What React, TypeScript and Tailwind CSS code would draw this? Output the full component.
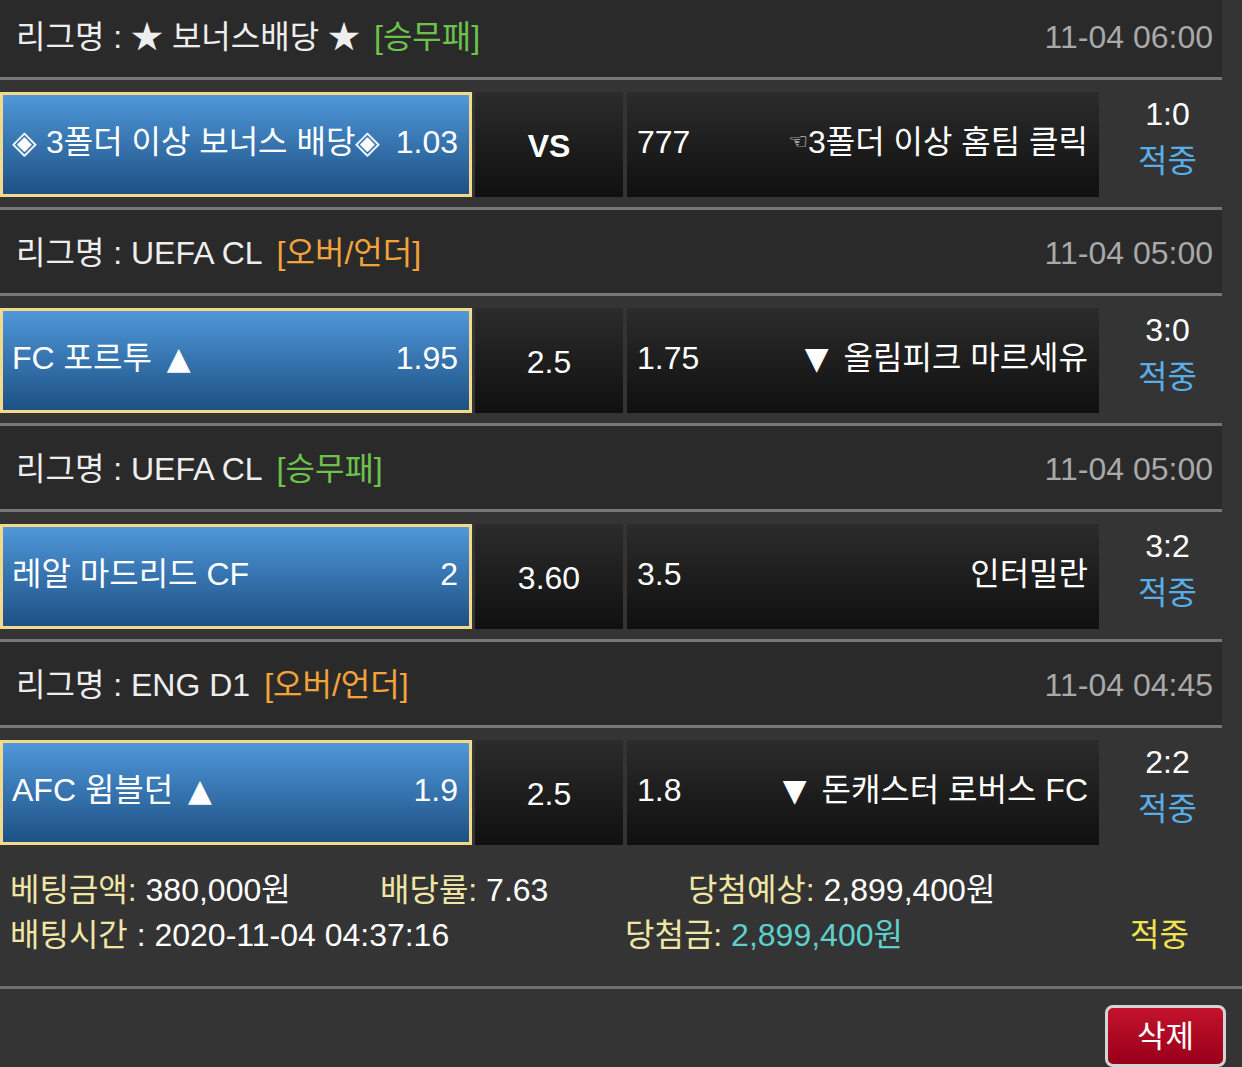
import React from 'react';

type Game = {
  league: string;
  kind: string;
  kindColor: string;
  date: string;
  home: React.ReactNode;
  homeOdd: string;
  mid: string;
  midBold?: boolean;
  awayOdd: string;
  away: React.ReactNode;
  score: string;
};

const GREEN = 'text-[#6cc24a]';
const ORANGE = 'text-[#f2a33a]';

// triangles are drawn bigger than Liberation Sans gives them
const Tri = ({ up }: { up?: boolean }) => (
  <span className={`font-['DejaVu_Sans',sans-serif] text-[31px] ${up ? 'ml-[6px]' : 'mr-[6px]'}`}>
    {up ? '▲' : '▼'}
  </span>
);

const games: Game[] = [
  {
    league: '★ 보너스배당 ★',
    kind: '[승무패]',
    kindColor: GREEN,
    date: '11-04 06:00',
    home: '◈ 3폴더 이상 보너스 배당◈',
    homeOdd: '1.03',
    mid: 'VS',
    midBold: true,
    awayOdd: '777',
    away: (
      <>
        <span className="text-[22px] font-['DejaVu_Sans',sans-serif] align-[4px]">☜</span>3폴더 이상 홈팀 클릭
      </>
    ),
    score: '1:0',
  },
  {
    league: 'UEFA CL',
    kind: '[오버/언더]',
    kindColor: ORANGE,
    date: '11-04 05:00',
    home: (
      <>
        FC 포르투 <Tri up />
      </>
    ),
    homeOdd: '1.95',
    mid: '2.5',
    awayOdd: '1.75',
    away: (
      <>
        <Tri /> 올림피크 마르세유
      </>
    ),
    score: '3:0',
  },
  {
    league: 'UEFA CL',
    kind: '[승무패]',
    kindColor: GREEN,
    date: '11-04 05:00',
    home: '레알 마드리드 CF',
    homeOdd: '2',
    mid: '3.60',
    awayOdd: '3.5',
    away: '인터밀란',
    score: '3:2',
  },
  {
    league: 'ENG D1',
    kind: '[오버/언더]',
    kindColor: ORANGE,
    date: '11-04 04:45',
    home: (
      <>
        AFC 윔블던 <Tri up />
      </>
    ),
    homeOdd: '1.9',
    mid: '2.5',
    awayOdd: '1.8',
    away: (
      <>
        <Tri /> 돈캐스터 로버스 FC
      </>
    ),
    score: '2:2',
  },
];

function GameBlock({ g }: { g: Game }) {
  return (
    <div>
      {/* league header */}
      <div className="w-[1222px] h-[89px] border-y-[3px] border-[#777] bg-[#2a2a2a] flex items-center justify-between pl-[16px] pr-[9px] pt-[3px]">
        <div className="text-[#eeeeee]">
          리그명 : {g.league}
          <span className={`${g.kindColor} ml-[14px]`}>{g.kind}</span>
        </div>
        <div className="text-[#a9a9a9]">{g.date}</div>
      </div>

      {/* match row */}
      <div className="w-[1222px] h-[127px] pt-[12px] flex">
        <div className="w-[472px] h-[105px] border-[3px] border-[#f3d98a] bg-gradient-to-b from-[#4f98da] to-[#1e5185] flex items-center justify-between pl-[9px] pr-[11px] pb-[5px] text-white">
          <span>{g.home}</span>
          <span>{g.homeOdd}</span>
        </div>
        <div
          className={`w-[148px] h-[105px] ml-[3px] bg-gradient-to-b from-[#2c2c2c] to-[#101010] flex items-center justify-center pt-[2px] text-white ${
            g.midBold ? 'font-bold' : ''
          }`}
        >
          {g.mid}
        </div>
        <div className="w-[472px] h-[105px] ml-[4px] bg-gradient-to-b from-[#2c2c2c] to-[#101010] flex items-center justify-between pl-[10px] pr-[11px] pb-[5px] text-white">
          <span>{g.awayOdd}</span>
          <span>{g.away}</span>
        </div>
        <div className="w-[123px] h-[105px] flex flex-col items-center justify-center pl-[14px] pb-[14px] leading-[47px]">
          <span className="text-white">{g.score}</span>
          <span className="text-[#5aaee8]">적중</span>
        </div>
      </div>
    </div>
  );
}

export default function App() {
  return (
    <div className="w-[1242px] h-[1067px] overflow-hidden bg-[#343434] font-['Liberation_Sans','Noto_Sans_CJK_KR',sans-serif] text-[32px] leading-none">
      <div className="-mt-[9px]">
        {games.map((g, i) => (
          <GameBlock key={i} g={g} />
        ))}
      </div>

      {/* bet summary */}
      <div className="pt-[13px] pb-[28px] leading-[45px]">
        <div className="flex">
          <div className="w-[380px] pl-[10px]">
            <span className="text-[#efe6a6]">베팅금액:</span> <span className="text-white">380,000원</span>
          </div>
          <div className="w-[308px]">
            <span className="text-[#efe6a6]">배당률:</span> <span className="text-white">7.63</span>
          </div>
          <div>
            <span className="text-[#efe6a6]">당첨예상:</span> <span className="text-white">2,899,400원</span>
          </div>
        </div>
        <div className="flex">
          <div className="w-[625px] pl-[10px]">
            <span className="text-[#efe6a6]">배팅시간</span> <span className="text-white">: 2020-11-04 04:37:16</span>
          </div>
          <div className="w-[505px]">
            <span className="text-[#efe6a6]">당첨금:</span> <span className="text-[#5ed0cb]">2,899,400원</span>
          </div>
          <div className="text-[#f1e24f]">적중</div>
        </div>
      </div>

      <div className="border-t-[3px] border-[#6e6e6e]" />

      <div className="flex justify-end pr-[16px] pt-[16px]">
        <button className="w-[121px] h-[62px] rounded-[8px] border-[3px] border-[#d4d4d4] bg-gradient-to-b from-[#c4132c] to-[#99001a] text-white text-[31px] flex items-center justify-center">
          삭제
        </button>
      </div>
    </div>
  );
}
